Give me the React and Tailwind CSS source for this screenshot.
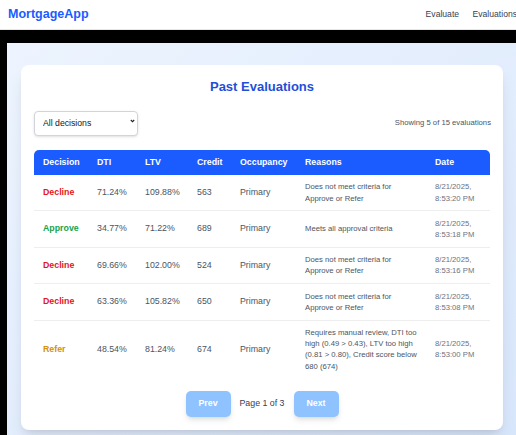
const rows = [
  {
    decision: 'Decline',
    dti: '71.24%',
    ltv: '109.88%',
    credit: '563',
    occupancy: 'Primary',
    reasons: 'Does not meet criteria for Approve or Refer',
    date: ['8/21/2025,', '8:53:20 PM'],
  },
  {
    decision: 'Approve',
    dti: '34.77%',
    ltv: '71.22%',
    credit: '689',
    occupancy: 'Primary',
    reasons: 'Meets all approval criteria',
    date: ['8/21/2025,', '8:53:18 PM'],
  },
  {
    decision: 'Decline',
    dti: '69.66%',
    ltv: '102.00%',
    credit: '524',
    occupancy: 'Primary',
    reasons: 'Does not meet criteria for Approve or Refer',
    date: ['8/21/2025,', '8:53:16 PM'],
  },
  {
    decision: 'Decline',
    dti: '63.36%',
    ltv: '105.82%',
    credit: '650',
    occupancy: 'Primary',
    reasons: 'Does not meet criteria for Approve or Refer',
    date: ['8/21/2025,', '8:53:08 PM'],
  },
  {
    decision: 'Refer',
    dti: '48.54%',
    ltv: '81.24%',
    credit: '674',
    occupancy: 'Primary',
    reasons:
      'Requires manual review, DTI too high (0.49 > 0.43), LTV too high (0.81 > 0.80), Credit score below 680 (674)',
    date: ['8/21/2025,', '8:53:00 PM'],
  },
];

const decisionColor = {
  Decline: 'text-[#e5141e]',
  Approve: 'text-[#16a34a]',
  Refer: 'text-[#d4900c]',
};

const App = () => {
  return (
    <div className="h-screen overflow-hidden font-['Liberation_Sans',Arial,sans-serif]">
      {/* barra de navegação */}
      <header className="h-[30px] bg-white border-b border-[#e5e7eb] flex items-center justify-between pl-[8px]">
        <span className="text-[12.5px] font-bold text-[#1a5cff]">MortgageApp</span>
        <nav className="flex gap-[13.5px] text-[8.6px] text-[#374151] mr-[-1px]">
          <a href="#">Evaluate</a>
          <a href="#">Evaluations</a>
        </nav>
      </header>

      <div className="bg-black pl-[7px] pt-[13px] h-[405px]">
        <div className="h-full bg-linear-to-br from-[#edf4fe] to-[#d8e6fb] pt-[22px] pl-[14px]">
          {/* cartão */}
          <div className="w-[482px] bg-white rounded-[8px] shadow-lg px-[13px] pt-[13px] pb-[13px]">
            <h1 className="text-center text-[13px] leading-[18px] font-bold text-[#1f4fd9]">
              Past Evaluations
            </h1>

            {/* filtro */}
            <div className="mt-[14px] h-[25px] flex items-center justify-between">
              <div className="relative">
                <select className="appearance-none w-[104px] h-[25px] pl-[8px] pr-[12px] text-[8.7px] text-[#111827] border border-[#d1d5db] rounded-[4px] shadow-sm bg-white">
                  <option>All decisions</option>
                  <option>Approve</option>
                  <option>Refer</option>
                  <option>Decline</option>
                </select>
                <svg
                  className="absolute right-[3px] top-[10.5px] pointer-events-none"
                  width="5"
                  height="4"
                  viewBox="0 0 5 4"
                  fill="none"
                >
                  <path d="M0.8 1L2.5 2.7L4.2 1" stroke="#222" strokeWidth="1.1" />
                </svg>
              </div>
              <span className="text-[7.7px] text-[#4b5563] mr-[-1px]">Showing 5 of 15 evaluations</span>
            </div>

            {/* tabela */}
            <div className="mt-[15px] rounded-t-[5px] overflow-hidden">
              <table className="w-full table-fixed border-collapse">
                <colgroup>
                  <col className="w-[54px]" />
                  <col className="w-[48px]" />
                  <col className="w-[52px]" />
                  <col className="w-[43px]" />
                  <col className="w-[65px]" />
                  <col className="w-[130px]" />
                  <col className="w-[64px]" />
                </colgroup>
                <thead>
                  <tr className="bg-[#1a5cff] h-[25px]">
                    {['Decision', 'DTI', 'LTV', 'Credit', 'Occupancy', 'Reasons', 'Date'].map((h) => (
                      <th key={h} className="p-0 pl-[9px] text-left text-[8.8px] font-bold text-white">
                        {h}
                      </th>
                    ))}
                  </tr>
                </thead>
                <tbody className="divide-y divide-[#eeeeee]">
                  {rows.map((r, i) => (
                    <tr key={i}>
                      <td className={`pl-[9px] py-[6.4px] text-[8.8px] leading-[11.3px] font-bold ${decisionColor[r.decision]}`}>
                        {r.decision}
                      </td>
                      <td className="pl-[9px] py-[6.4px] text-[8.8px] leading-[11.3px] text-[#4b5563]">{r.dti}</td>
                      <td className="pl-[9px] py-[6.4px] text-[8.8px] leading-[11.3px] text-[#4b5563]">{r.ltv}</td>
                      <td className="pl-[9px] py-[6.4px] text-[8.8px] leading-[11.3px] text-[#4b5563]">{r.credit}</td>
                      <td className="pl-[9px] py-[6.4px] text-[8.8px] leading-[11.3px] text-[#4b5563]">{r.occupancy}</td>
                      <td className="pl-[9px] pr-[6px] py-[6.4px] text-[7.7px] leading-[11.3px] text-[#4b5563]">
                        {r.reasons}
                      </td>
                      <td className="pl-[9px] py-[6.4px] text-[7.7px] leading-[11.3px] text-[#6b7280]">
                        {r.date[0]}
                        <br />
                        {r.date[1]}
                      </td>
                    </tr>
                  ))}
                </tbody>
              </table>
            </div>

            {/* paginação */}
            <div className="mt-[12.5px] flex items-center justify-center gap-[9px]">
              <button className="w-[45px] h-[26px] rounded-[5px] bg-[#8ec3ff] text-white text-[8.8px] font-bold shadow-md">
                Prev
              </button>
              <span className="text-[8.8px] text-[#374151]">Page 1 of 3</span>
              <button className="w-[45px] h-[26px] rounded-[5px] bg-[#8ec3ff] text-white text-[8.8px] font-bold shadow-md">
                Next
              </button>
            </div>
          </div>
        </div>
      </div>
    </div>
  );
};

export default App;
